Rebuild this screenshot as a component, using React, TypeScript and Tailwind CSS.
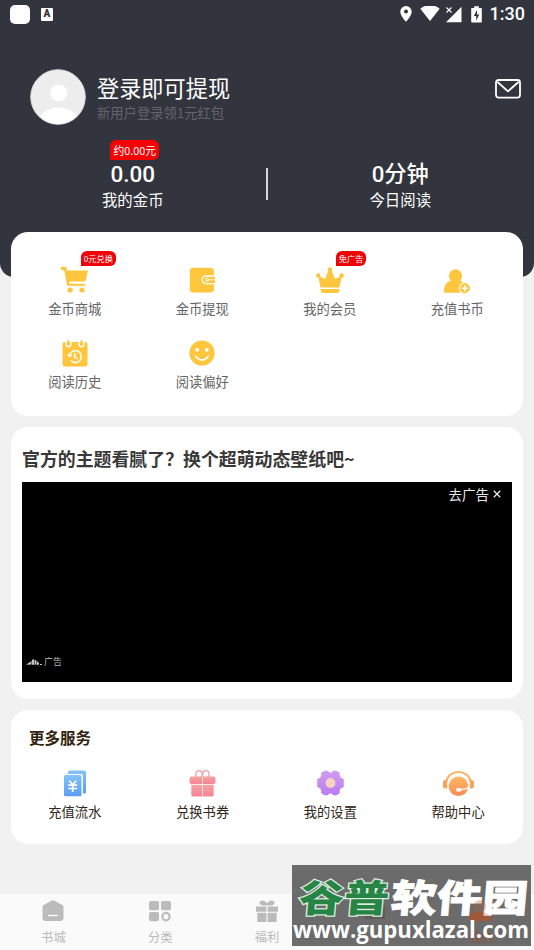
import type { ReactNode } from 'react';

const AMBER = '#fec63d';

function CartIcon() {
  return (
    <svg width="29" height="28" viewBox="0 0 29 28" fill={AMBER}>
      <path d="M1 .8h4.400a1 1 0 0 1 1 .8l.6 3H28l-2.300 9.600a1.500 1.500 0 0 1-1.500 1.200H9.200l.4 2.400h15.600v1.900H8.200a1.300 1.300 0 0 1-1.300-1L4.200 4.300H2.500A1.700 1.700 0 0 1 1 2.600Z" />
      <circle cx="10.200" cy="24" r="2.600" />
      <circle cx="22" cy="24" r="2.600" />
    </svg>
  );
}

function WalletIcon() {
  return (
    <svg width="26" height="26" viewBox="0 0 26 26">
      <rect x=".8" y=".8" width="24.200" height="24.700" rx="3.500" fill={AMBER} />
      <path d="M26 9H17a3.800 3.800 0 0 0 0 7.600h9" fill={AMBER} stroke="#fff" strokeWidth="1.400" />
      <circle cx="18" cy="12.800" r="1.500" fill={AMBER} stroke="#fff" strokeWidth="1" />
      <path d="M19.500 12.800H26" stroke="#fff" strokeWidth=".8" />
    </svg>
  );
}

function CrownIcon() {
  return (
    <svg width="28" height="27" viewBox="0 0 28 27" fill={AMBER}>
      <path d="m2 8.500 7 3.500L12.700 3h2.600L19 12l7-3.500-2.600 12H4.600Z" />
      <circle cx="2.300" cy="8.500" r="2.200" />
      <circle cx="14" cy="2.500" r="2.300" />
      <circle cx="25.700" cy="8.500" r="2.200" />
      <path d="M4.600 22h18.800v1a3 3 0 0 1-3 3H7.600a3 3 0 0 1-3-3Z" />
    </svg>
  );
}

function PersonPlusIcon() {
  return (
    <svg width="28" height="27" viewBox="0 0 28 27">
      <path d="M1 24.500c0-6 2.500-9.500 7-11a6.500 6.500 0 1 1 9 0c3.500 1.500 6 4 6.500 7v5.300H2.200A1.200 1.200 0 0 1 1 24.500Z" fill={AMBER} />
      <circle cx="21.800" cy="21.200" r="5.200" fill="#fff" stroke="#fff" strokeWidth="1.800" />
      <circle cx="21.800" cy="21.200" r="4.700" fill={AMBER} stroke={AMBER} strokeWidth=".8" />
      <path d="M21.800 18v6.400M18.600 21.200H25" stroke="#fff" strokeWidth="1.500" />
    </svg>
  );
}

function HistoryIcon() {
  return (
    <svg width="26" height="27" viewBox="0 0 26 27">
      <rect x=".5" y="2" width="25" height="24.500" rx="2.500" fill={AMBER} />
      <path d="M4.100 1v3.300a2.400 2.400 0 0 0 4.800 0V1M17.100 1v3.300a2.400 2.400 0 0 0 4.800 0V1" fill="none" stroke="#fff" strokeWidth="1.400" />
      <path d="M6.500 1v3.200M19.500 1v3.200" stroke={AMBER} strokeWidth="2" strokeLinecap="round" />
      <path d="M7.400 15.500A6 6 0 1 1 8.800 20.500M5.800 14.300l1.700 2 2.600-1.200M12.800 13v4l2.800 1.800" fill="none" stroke="#fff" strokeWidth="1.400" />
    </svg>
  );
}

function SmileIcon() {
  return (
    <svg width="26" height="26" viewBox="0 0 26 26">
      <circle cx="13" cy="13" r="12.600" fill={AMBER} />
      <circle cx="8.200" cy="9.800" r="1.900" fill="#fff" />
      <circle cx="17.800" cy="9.800" r="1.900" fill="#fff" />
      <path d="M6.700 16.200c3.600 5 9 5 12.600 0" fill="none" stroke="#fff" strokeWidth="1.700" strokeLinecap="round" />
    </svg>
  );
}

function BillIcon() {
  return (
    <svg width="24" height="27" viewBox="0 0 24 27">
      <defs>
        <linearGradient id="bill" x2="0" y2="1">
          <stop stopColor="#85c2f5" />
          <stop offset="1" stopColor="#5a9df5" />
        </linearGradient>
      </defs>
      <path d="M7 .5h14a2 2 0 0 1 2 2V22a1.500 1.500 0 0 1-1.500 1.500H20V6a2 2 0 0 0-2-2H5V2.500a2 2 0 0 1 2-2Z" fill="url(#bill)" />
      <path d="M2.500 5H17a1.500 1.500 0 0 1 1.500 1.500v18.300a1.500 1.500 0 0 1-1.500 1.500H2.500A1.500 1.500 0 0 1 1 24.800V6.500A1.500 1.500 0 0 1 2.500 5Z" fill="url(#bill)" />
      <path d="m6.300 10.800 3.400 4 3.400-4M5.300 15.200h8.800M5.300 18.500h8.800M9.700 14.500v7.500" fill="none" stroke="#fff" strokeWidth="1.700" />
    </svg>
  );
}

function CouponGiftIcon() {
  return (
    <svg width="27" height="27" viewBox="0 0 27 27">
      <defs>
        <linearGradient id="gift" x2="0" y2="1">
          <stop stopColor="#f3a5a2" />
          <stop offset="1" stopColor="#f78394" />
        </linearGradient>
      </defs>
      <ellipse cx="10" cy="4.300" rx="3.200" ry="3.600" fill="none" stroke="#f3a09e" strokeWidth="1.300" />
      <ellipse cx="16.800" cy="4.300" rx="3.200" ry="3.600" fill="none" stroke="#f3a09e" strokeWidth="1.300" />
      <rect x=".5" y="6.500" width="26" height="7.500" rx="2" fill="url(#gift)" />
      <path d="M2.300 14.700h22.400v9.800a2 2 0 0 1-2 2H4.300a2 2 0 0 1-2-2Z" fill="url(#gift)" />
      <path d="M13.500 7v19.500" stroke="#fff" strokeWidth=".7" />
    </svg>
  );
}

function GearIcon() {
  return (
    <svg width="27" height="26" viewBox="0 0 27 26">
      <defs>
        <linearGradient id="gear" x2="0" y2="1">
          <stop stopColor="#cf9cf0" />
          <stop offset="1" stopColor="#bb7cf2" />
        </linearGradient>
      </defs>
      <path
        d="M8 1.500h2.500L12 3.200h3l1.500-1.700H19l3 1.700v2.600l1.500 2.700 2.500 1v7l-2.500 1L22 20.200v2.600l-3 1.700h-2.500L15 22.800h-3l-1.500 1.700H8l-3-1.700v-2.600L3.500 17.500l-2.500-1v-7l2.500-1L5 5.800V3.200Z"
        fill="url(#gear)"
        stroke="url(#gear)"
        strokeWidth="1.500"
        strokeLinejoin="round"
      />
      <circle cx="13.500" cy="13" r="4.900" fill="#f7d1c2" />
    </svg>
  );
}

function HeadsetIcon() {
  return (
    <svg width="33" height="28" viewBox="0 0 33 28">
      <defs>
        <linearGradient id="headset" x2="0" y2="1">
          <stop stopColor="#fdb862" />
          <stop offset="1" stopColor="#fb8b52" />
        </linearGradient>
      </defs>
      <path d="M4.300 12.500a12.300 11 0 0 1 24.400 0" fill="none" stroke="#fbb062" strokeWidth="1.900" />
      <path d="M3.500 11h1.700v8.500H3.500A2.500 2.500 0 0 1 1 17v-3.500A2.500 2.500 0 0 1 3.500 11Zm24.300 0h1.700a2.500 2.500 0 0 1 2.500 2.500V17a2.500 2.500 0 0 1-2.500 2.500h-1.700Z" fill="#f9a05a" />
      <circle cx="16.500" cy="17.300" r="9.800" fill="url(#headset)" />
      <path d="M28 17.500c-3 2.300-6 3.200-10.500 3.200" fill="none" stroke="#fff" strokeWidth="1.300" />
      <rect x="14" y="19" width="5.500" height="3.600" rx="1.700" fill="#fff" />
    </svg>
  );
}

function Tile({ icon, label, badge, dark }: { icon: ReactNode; label: string; badge?: string; dark?: boolean }) {
  return (
    <div className="relative flex flex-col items-center">
      <div className="flex h-7 items-center justify-center">{icon}</div>
      {badge && (
        <span className="absolute -top-[15px] left-1/2 ml-[6px] flex h-[15px] items-center whitespace-nowrap rounded-[6px] rounded-bl-none bg-[#ee0308] px-[3px] text-[8.200px] leading-none text-white">
          {badge}
        </span>
      )}
      <span className={`mt-[5px] text-[13.3px] leading-5 ${dark ? 'text-[#30261b]' : 'text-[#666]'}`}>{label}</span>
    </div>
  );
}

function StatusBar() {
  return (
    <div className="flex h-7 items-center justify-between pl-[10px] pr-[9px] text-white">
      <div className="flex items-center gap-[11px]">
        <span className="h-[19px] w-5 rounded-[5px] bg-white" />
        <span className="flex h-[13px] w-3 items-center justify-center rounded-[1px] bg-white font-['Roboto'] text-[10px] font-black leading-none text-[#32343e]">
          A
        </span>
      </div>
      <div className="flex items-center">
        <svg width="12" height="16" viewBox="0 0 12 16" fill="#fff">
          <path fillRule="evenodd" d="M6 0a5.700 5.700 0 0 0-5.700 5.700C.3 9.800 6 15.700 6 15.700s5.700-5.900 5.700-10A5.700 5.700 0 0 0 6 0Zm0 3.600a2 2 0 1 1 0 4 2 2 0 0 1 0-4Z" />
        </svg>
        <svg className="ml-2" width="20" height="16" viewBox="0 0 20 16" fill="#fff">
          <path d="M10 15 .3 2.700a15.500 15.500 0 0 1 19.400 0Z" />
        </svg>
        <svg className="ml-[5px]" width="18" height="17" viewBox="0 0 18 17">
          <path d="M16.500.8V16.200H1Z" fill="#fff" />
          <path d="M.5 0h7.500v7.500H.5z" fill="#32343e" />
          <path d="m1.500 1.500 5 5m0-5-5 5" stroke="#fff" strokeWidth="1.100" />
        </svg>
        <svg className="ml-2" width="11" height="17" viewBox="0 0 11 17">
          <path d="M3.200.2h4.600V2H10a.8.8 0 0 1 .8.8v12.900a.8.8 0 0 1-.8.8H1a.8.8 0 0 1-.8-.8V2.800A.8.8 0 0 1 1 2h2.200Z" fill="#fff" />
          <path d="M6 4 2.800 10h2.400v4.500L8.300 8.400H6Z" fill="#32343e" />
        </svg>
        <span className="ml-[8px] font-['Roboto'] text-[18px] font-medium leading-7">1:30</span>
      </div>
    </div>
  );
}

function Header() {
  return (
    <header className="h-[277px] rounded-b-[14px] bg-[#32343e] text-white">
      <StatusBar />
      <div className="flex h-[112px] pl-[30px] pr-[13px] pt-[41px]">
        <svg width="56" height="56" viewBox="0 0 56 56">
          <clipPath id="avatar"><circle cx="28" cy="28" r="27" /></clipPath>
          <circle cx="28" cy="28" r="27.300" fill="#ededed" stroke="#d8d8d8" strokeWidth="1" />
          <g fill="#fff" clipPath="url(#avatar)">
            <circle cx="28.700" cy="24" r="8.500" />
            <ellipse cx="28.500" cy="54" rx="20" ry="15.500" />
          </g>
        </svg>
        <div className="ml-[11px] flex flex-1 flex-col">
          <span className="text-[22.200px] leading-9">登录即可提现</span>
          <span className="text-[13.300px] leading-4 text-[#65666c]">新用户登录领1元红包</span>
        </div>
        <svg className="mt-[10px]" width="26" height="20" viewBox="0 0 26 20" fill="none" stroke="#fff" strokeWidth="1.800" strokeLinejoin="round">
          <rect x="1" y="1" width="24" height="17.600" rx="2.500" />
          <path d="m2.500 3 10.500 9.300L23.500 3" />
        </svg>
      </div>
      <div className="flex h-[72px]">
        <div className="flex flex-1 flex-col items-center">
          <span className="ml-[4px] flex h-5 items-center rounded-md rounded-bl-none bg-[#f40206] px-[3px] text-[10.800px] leading-none">约0.00元</span>
          <span className="font-['Roboto','Noto_Sans_CJK_SC',sans-serif] text-[22.500px] font-medium leading-7">0.00</span>
          <span className="-mt-px text-[15.400px] leading-6">我的金币</span>
        </div>
        <span className="mt-7 h-8 w-[2px] bg-[#d4d5d8]" />
        <div className="flex flex-1 flex-col items-center pr-px pt-5">
          <span className="font-['Roboto','Noto_Sans_CJK_SC',sans-serif] text-[22.200px] font-medium leading-7">0分钟</span>
          <span className="-mt-px text-[15.400px] leading-6">今日阅读</span>
        </div>
      </div>
    </header>
  );
}

function TabBar() {
  return (
    <nav className="mt-[50px] grid h-14 grid-cols-5 bg-[#fafafa] text-[12.300px] text-[#b9b9b9]">
      <div className="flex flex-col items-center pt-[6px]">
        <svg width="24" height="22" viewBox="0 0 24 22">
          <path d="M10.500.8a3 3 0 0 1 3 0l7.700 4.300a2 2 0 0 1 1.300 1.900v11a3 3 0 0 1-3 3h-15a3 3 0 0 1-3-3V7a2 2 0 0 1 1.300-1.900Z" fill="#bbb" />
          <path d="M7 15.500h10" stroke="#fff" strokeWidth="1.300" />
        </svg>
        <span className="mt-[5px] leading-5">书城</span>
      </div>
      <div className="flex flex-col items-center pt-[6px]">
        <svg width="24" height="22" viewBox="0 0 24 22" fill="#bbb">
          <rect x="1" y="1" width="10" height="9.300" rx="2" />
          <rect x="13" y="1" width="10" height="9.300" rx="2" />
          <rect x="1" y="12" width="10" height="9.300" rx="2" />
          <circle cx="18" cy="16.600" r="3.700" fill="none" stroke="#bbb" strokeWidth="2.200" />
        </svg>
        <span className="mt-[5px] leading-5">分类</span>
      </div>
      <div className="flex flex-col items-center pt-[6px]">
        <svg width="24" height="23" viewBox="0 0 24 23" fill="#bbb">
          <path d="M12 5.300C9 5.700 5 5.700 4.500 3.200 4.200.4 8 0 9.800 1.300L12 3.300l2.200-2C16 0 19.800.4 19.500 3.200 19 5.700 15 5.700 12 5.300Z" />
          <path d="M1 6.500h10.400v5.200H1Zm11.600 0H23v5.200H12.600ZM2.300 12.700h9.100V22H2.300Zm10.300 0h9.100V22h-9.100Z" />
        </svg>
        <span className="mt-[4px] leading-5">福利</span>
      </div>
    </nav>
  );
}

function Watermark() {
  return (
    <aside className="absolute left-[292px] top-[865px] h-[81px] w-[239px] bg-[#6b6b6b]">
      <span className="absolute left-[177px] top-[62px] text-[12.300px] leading-5 text-[#8b563e]">我的</span>
      <div className="absolute left-[73px] top-[41px] h-[13px] w-5 bg-[#5c5c5c]" />
      <svg className="absolute left-0 top-0" width="239" height="81" viewBox="0 0 239 81" fontFamily="'Noto Sans CJK SC', sans-serif" fontWeight="900">
        <path d="M177 56v-4c0-3 4-5 8-5h6c4 0 8 2 8 5v4Z" fill="#965538" />
        <g fontSize="38" transform="translate(6 47) skewX(-5)">
          <text textLength="90" lengthAdjust="spacingAndGlyphs" fill="#268545" stroke="#dfeee1" strokeWidth="2.400" paintOrder="stroke">谷普</text>
          <text x="92" textLength="137" lengthAdjust="spacingAndGlyphs" fill="#fff" stroke="#fff" strokeWidth=".8">软件园</text>
        </g>
        <path d="M182 41a6 6 0 1 1 12 0c0 3-1 5-3 6l8 4v5h-22v-5l8-4c-2-1-3-3-3-6Z" fill="#b5623a" opacity=".35" />
        <text x="1" y="73" textLength="236" lengthAdjust="spacingAndGlyphs" fontFamily="'Open Sans', sans-serif" fontSize="22.500" fontWeight="700" fill="#fff">www.gupuxlazal.com</text>
      </svg>
    </aside>
  );
}

export default function App() {
  return (
    <div className="relative h-[950px] w-[534px] overflow-hidden bg-[#f1f1f1] font-['Noto_Sans_CJK_SC',sans-serif]">
      <Header />
      <main className="relative -mt-[45px] flex flex-col gap-[11px] px-[11px]">
        <section className="h-[184px] rounded-[17px] bg-white pt-[34px]">
          <div className="grid w-[510px] grid-cols-4 gap-y-5">
            <Tile icon={<CartIcon />} label="金币商城" badge="0元兑换" />
            <Tile icon={<WalletIcon />} label="金币提现" />
            <Tile icon={<CrownIcon />} label="我的会员" badge="免广告" />
            <Tile icon={<PersonPlusIcon />} label="充值书币" />
            <Tile icon={<HistoryIcon />} label="阅读历史" />
            <Tile icon={<SmileIcon />} label="阅读偏好" />
          </div>
        </section>
        <section className="h-[272px] rounded-[17px] bg-white px-[11px] pt-[17px]">
          <h2 className="text-[17.900px] font-bold leading-7 text-[#383838]">官方的主题看腻了？换个超萌动态壁纸吧~</h2>
          <div className="mt-[10px] flex h-[200px] w-[490px] flex-col justify-between bg-black px-1 pb-[10px] pt-[2px]">
            <span className="flex items-center self-end pr-[7px] text-[13.500px] leading-5 text-[#e8e8e8]">
              去广告
              <svg className="ml-1" width="8" height="8" viewBox="0 0 8 8" stroke="#e8e8e8" strokeWidth="1.300">
                <path d="m.8.8 6.400 6.400m0-6.400L.8 7.200" />
              </svg>
            </span>
            <span className="flex items-center text-[9px] leading-5 text-[#b9b9b9]">
              <svg className="mr-[2px]" width="16" height="7" viewBox="0 0 16 7" fill="#c5c5c5">
                <path d="M0 5.800 5.500 2v3.600ZM6 .8 8 .3v5.400H6Zm2.500-.3 2 1.200v4h-2ZM11 2l2 2v1.800h-2Zm3 3h2v1h-2Z" />
              </svg>
              广告
            </span>
          </div>
        </section>
        <section className="h-[134px] rounded-[17px] bg-white pt-[14px]">
          <h2 className="ml-[18px] text-[15.500px] font-bold leading-[26px] text-[#33230f]">更多服务</h2>
          <div className="mt-[19px] grid w-[511px] grid-cols-4">
            <Tile dark icon={<BillIcon />} label="充值流水" />
            <Tile dark icon={<CouponGiftIcon />} label="兑换书券" />
            <Tile dark icon={<GearIcon />} label="我的设置" />
            <Tile dark icon={<HeadsetIcon />} label="帮助中心" />
          </div>
        </section>
      </main>
      <TabBar />
      <Watermark />
    </div>
  );
}
